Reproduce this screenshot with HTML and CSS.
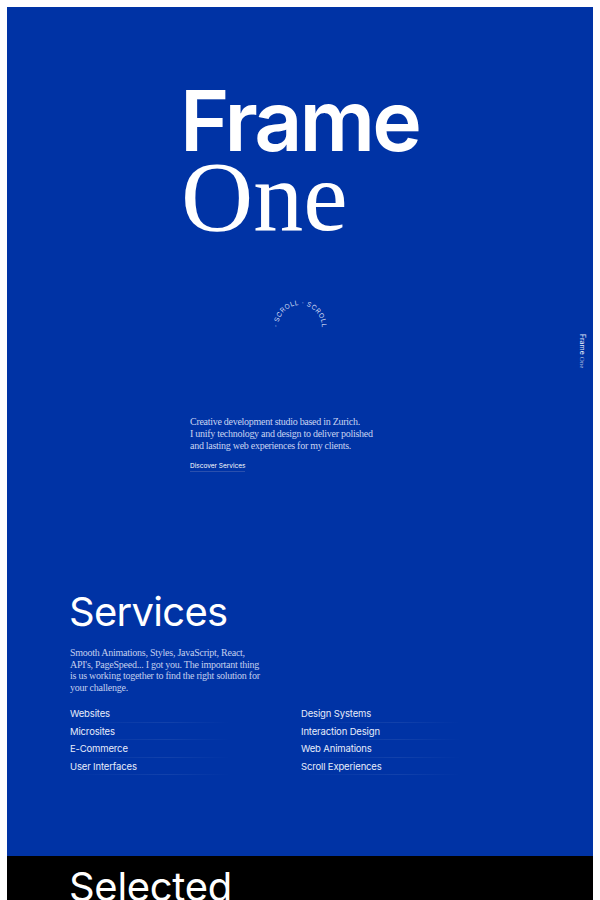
FILE: index.html
```html
<!DOCTYPE html>
<html lang="en">
<head>
    <meta charset="UTF-8">
    <meta name="viewport" content="width=device-width, initial-scale=1.0">
    <title>Frame One</title>
    <link rel="stylesheet" href="styles.css">
</head>
<body>
    <div class="frame">
        <main class="blue">
            <section class="hero">
                <h1 class="logo">
                    <span class="logo-sans">Frame</span>
                    <span class="logo-serif">One</span>
                </h1>
                <div class="scroll-badge">
                    <svg width="70" height="50" viewBox="0 0 70 50">
                        <defs>
                            <path id="scrollArc" d="M13 33 A 22 22 0 0 1 57 33"></path>
                        </defs>
                        <text class="scroll-text">
                            <textPath href="#scrollArc" textLength="69">· SCROLL · SCROLL</textPath>
                        </text>
                    </svg>
                </div>
                <div class="intro">
                    <p>Creative development studio based in Zurich.<br>I unify technology and design to deliver polished<br>and lasting web experiences for my clients.</p>
                    <a href="#services" class="intro-link">Discover Services</a>
                </div>
            </section>
            <section class="services" id="services">
                <h2>Services</h2>
                <p class="services-text">Smooth Animations, Styles, JavaScript, React,<br>API's, PageSpeed... I got you. The important thing<br>is us working together to find the right solution for<br>your challenge.</p>
                <div class="services-grid">
                    <ul>
                        <li>Websites</li>
                        <li>Microsites</li>
                        <li>E-Commerce</li>
                        <li>User Interfaces</li>
                    </ul>
                    <ul>
                        <li>Design Systems</li>
                        <li>Interaction Design</li>
                        <li>Web Animations</li>
                        <li>Scroll Experiences</li>
                    </ul>
                </div>
            </section>
            <div class="side-label"><span>Frame</span> <em>One</em></div>
        </main>
        <section class="selected">
            <h2>Selected</h2>
        </section>
    </div>
</body>
</html>
```

FILE: styles.css
```css
html, body {
    margin: 0;
    padding: 0;
    height: 900px;
    overflow: hidden;
    background-color: #fff;
}

body {
    font-family: "Inter", sans-serif;
    color: #fff;
}

.frame {
    padding: 7px 7px 0;
    height: 893px;
    display: flex;
    flex-direction: column;
}

.blue {
    position: relative;
    height: 849px;
    background-color: #0033a5;
}

.hero {
    padding: 74px 0 0 173px;
}

.logo {
    margin: 0;
    font-weight: 500;
}

.logo span {
    display: block;
}

.logo-sans {
    font-size: 84px;
    line-height: 80px;
    letter-spacing: -2.9px;
    font-weight: 600;
}

.logo-serif {
    margin: -4px 0 0 1px;
    font-family: "Liberation Serif", serif;
    font-weight: 400;
    font-size: 100px;
    line-height: 80px;
}

.scroll-badge {
    margin: 57px 0 0 85px;
    width: 70px;
    height: 50px;
}

.scroll-text {
    font-size: 6.6px;
    fill: #cfd9f3;
}

.intro {
    margin: 72px 0 0 10px;
}

.intro p {
    margin: 0;
    font-family: "Liberation Serif", serif;
    font-size: 10px;
    line-height: 12px;
    letter-spacing: -0.28px;
    color: #c9d4f1;
}

.intro-link {
    display: inline-block;
    margin-top: 9px;
    font-size: 6.5px;
    line-height: 10px;
    color: #fff;
    text-decoration: none;
    border-bottom: 1px solid #2a50ae;
}

.services {
    padding: 116px 0 0 63px;
}

.services h2 {
    margin: 0 0 0 -1px;
    font-size: 40px;
    line-height: 48px;
    font-weight: 400;
    letter-spacing: -0.7px;
}

.services-text {
    margin: 11px 0 0;
    font-family: "Liberation Serif", serif;
    font-size: 10px;
    line-height: 11.7px;
    letter-spacing: -0.25px;
    color: #c3cfee;
}

.services-grid {
    display: grid;
    grid-template-columns: 231px 200px;
    margin-top: 11.5px;
}

.services-grid ul {
    margin: 0;
    padding: 0;
    list-style: none;
}

.services-grid li {
    font-size: 9.5px;
    line-height: 17.4px;
    letter-spacing: -0.15px;
    color: #e6ecfa;
    background: linear-gradient(90deg, rgba(255, 255, 255, 0) 0, rgba(255, 255, 255, 0.07) 60%, rgba(255, 255, 255, 0) 100%) no-repeat left bottom / 160px 1px;
}

.side-label {
    position: absolute;
    top: 327px;
    right: 7px;
    writing-mode: vertical-rl;
    font-size: 7px;
    line-height: 8px;
    color: #e6ecfa;
}

.side-label em {
    font-family: "Liberation Serif", serif;
    font-style: normal;
    color: #a9badf;
}

.selected {
    flex: 1;
    padding-left: 63px;
    background-color: #000;
    overflow: hidden;
}

.selected h2 {
    margin: 7px 0 0 -1px;
    font-size: 40px;
    line-height: 48px;
    font-weight: 400;
    letter-spacing: -0.3px;
}
```
